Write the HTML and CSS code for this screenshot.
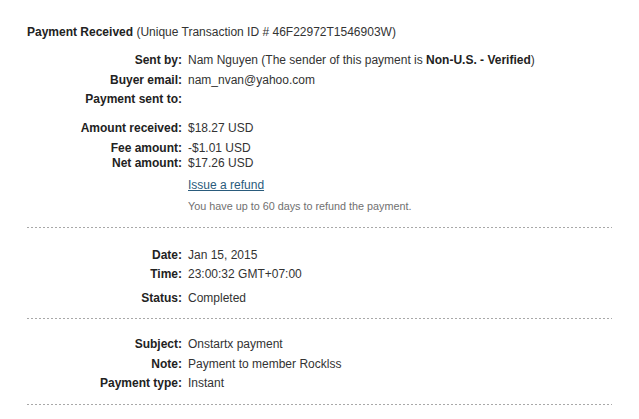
FILE: index.html
```html
<!DOCTYPE html>
<html>
<head>
<meta charset="utf-8">
<link rel="stylesheet" href="styles.css">
</head>
<body>
<div class="page">
  <div class="title"><b>Payment Received</b> (Unique Transaction ID # 46F22972T1546903W)</div>

  <div class="section s1">
    <div class="row"><span class="lbl">Sent by:</span><span class="val">Nam Nguyen (The sender of this payment is <b>Non-U.S. - Verified</b>)</span></div>
    <div class="row"><span class="lbl">Buyer email:</span><span class="val">nam_nvan@yahoo.com</span></div>
    <div class="row"><span class="lbl">Payment sent to:</span><span class="val"></span></div>
    <div class="row gap-top"><span class="lbl">Amount received:</span><span class="val">$18.27 USD</span></div>
    <div class="row"><span class="lbl">Fee amount:</span><span class="val">-$1.01 USD</span></div>
    <div class="row tight"><span class="lbl">Net amount:</span><span class="val">$17.26 USD</span></div>
    <div class="row refund"><span class="lbl"></span><span class="val"><a class="link" href="#">Issue a refund</a></span></div>
    <div class="row hint"><span class="lbl"></span><span class="val hint-text">You have up to 60 days to refund the payment.</span></div>
  </div>
  <div class="dots"></div>

  <div class="section s2">
    <div class="row"><span class="lbl">Date:</span><span class="val">Jan 15, 2015</span></div>
    <div class="row"><span class="lbl">Time:</span><span class="val">23:00:32 GMT+07:00</span></div>
    <div class="row status"><span class="lbl">Status:</span><span class="val">Completed</span></div>
  </div>
  <div class="dots"></div>

  <div class="section s3">
    <div class="row"><span class="lbl">Subject:</span><span class="val">Onstartx payment</span></div>
    <div class="row"><span class="lbl">Note:</span><span class="val">Payment to member Rocklss</span></div>
    <div class="row"><span class="lbl">Payment type:</span><span class="val">Instant</span></div>
  </div>
  <div class="dots"></div>
</div>
</body>
</html>
```

FILE: styles.css
```css
html, body {
  margin: 0;
  padding: 0;
  background: #ffffff;
}

body {
  font-family: "Liberation Sans", Arial, sans-serif;
  font-size: 12px;
  line-height: 15px;
  color: #333333;
}

.page {
  padding: 25px 27px 0 22px;
}

.title {
  padding-left: 5px;
}

.title b {
  color: #222222;
}

.section {
  display: flex;
  flex-direction: column;
}

.s1 {
  padding-top: 13px;
  padding-bottom: 13px;
}

.s2 {
  padding-top: 20px;
  padding-bottom: 12px;
}

.s3 {
  padding-top: 18px;
  padding-bottom: 13px;
}

.row {
  display: grid;
  grid-template-columns: 160px 1fr;
  column-gap: 6px;
  margin-top: 4.5px;
}

.row:first-child {
  margin-top: 0;
}

.lbl {
  text-align: right;
  font-weight: bold;
  color: #222222;
}

.val {
  color: #333333;
  min-height: 15px;
}

.val b {
  color: #222222;
}

.gap-top {
  margin-top: 14px;
}

.tight {
  margin-top: 0;
}

.refund {
  margin-top: 7px;
}

.link {
  color: #2a5b7c;
  text-decoration: underline;
}

.hint {
  margin-top: 6px;
  font-size: 10.8px;
}

.hint-text {
  color: #707070;
}

.s2 .status {
  margin-top: 9px;
}

.dots {
  height: 1px;
  margin-left: 5px;
  width: 585px;
  background-image: repeating-linear-gradient(to right, #a8a8a8 0 2px, transparent 2px 4px);
}
```
